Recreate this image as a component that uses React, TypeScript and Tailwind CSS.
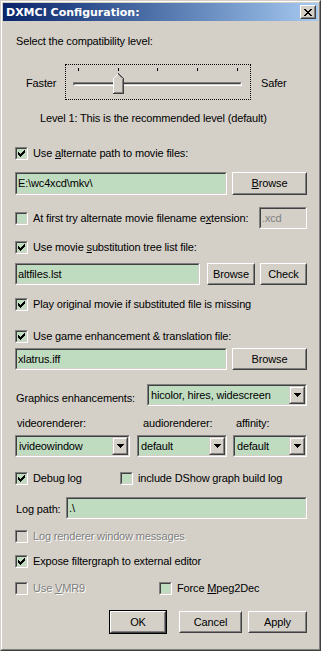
import React from "react";

// small pixel glyphs (classic windows look)
const CHECK = ["......#", ".....##", "#...###", "##.###.", "#####..", ".###...", "..#...."];
const CLOSE = ["##....##", ".##..##.", "..####..", "...##...", "..####..", ".##..##.", "##....##"];
const ARROW = ["#######", ".#####.", "..###..", "...#..."];

function Pix({ rows, color = "#000" }: { rows: string[]; color?: string }) {
  const w = rows[0].length;
  const h = rows.length;
  return (
    <svg width={w} height={h} viewBox={`0 0 ${w} ${h}`} shapeRendering="crispEdges" className="block">
      {rows.flatMap((r, y) =>
        r.split("").map((c, x) =>
          c === "#" ? <rect key={`${x}-${y}`} x={x} y={y} width={1} height={1} fill={color} /> : null
        )
      )}
    </svg>
  );
}

function Sunken({
  className = "",
  fill = "bg-[#c0dcc0]",
  children,
}: {
  className?: string;
  fill?: string;
  children?: React.ReactNode;
}) {
  return (
    <div className={`border border-t-[#808080] border-l-[#808080] border-b-white border-r-white ${className}`}>
      <div
        className={`flex h-full w-full items-center border border-t-[#404040] border-l-[#404040] border-b-[#d4d0c8] border-r-[#d4d0c8] ${fill}`}
      >
        {children}
      </div>
    </div>
  );
}

function Raised({ className = "", children }: { className?: string; children?: React.ReactNode }) {
  return (
    <div className={`border border-t-white border-l-white border-b-[#404040] border-r-[#404040] bg-[#d4d0c8] ${className}`}>
      <div className="flex h-full w-full items-center justify-center border border-t-[#d4d0c8] border-l-[#d4d0c8] border-b-[#808080] border-r-[#808080]">
        {children}
      </div>
    </div>
  );
}

function Button({ label, className = "", isDefault }: { label: React.ReactNode; className?: string; isDefault?: boolean }) {
  if (isDefault) {
    return (
      <div className={`border border-black ${className}`}>
        <Raised className="h-full w-full">{label}</Raised>
      </div>
    );
  }
  return <Raised className={className}>{label}</Raised>;
}

function CheckBox({
  checked,
  disabled,
  label,
  className = "",
}: {
  checked?: boolean;
  disabled?: boolean;
  label: React.ReactNode;
  className?: string;
}) {
  return (
    <div className={`flex h-[13px] items-center ${className}`}>
      <Sunken className="h-[13px] w-[13px] shrink-0" fill={disabled ? "bg-[#d4d0c8]" : "bg-[#c0dcc0]"}>
        {checked && (
          <div className="flex h-full w-full items-center justify-center">
            <Pix rows={CHECK} />
          </div>
        )}
      </Sunken>
      <span
        className={`ml-[5px] whitespace-nowrap leading-[13px] ${
          disabled ? "text-[#808080] [text-shadow:1px_1px_0_#fff]" : "text-black"
        }`}
      >
        {label}
      </span>
    </div>
  );
}

function Combo({ value, className = "" }: { value: string; className?: string }) {
  return (
    <Sunken className={className}>
      <span className="flex-1 truncate pl-[2px] leading-[13px]">{value}</span>
      <div className="flex h-full w-[16px] items-center justify-center border border-t-[#d4d0c8] border-l-[#d4d0c8] border-b-[#404040] border-r-[#404040] bg-[#d4d0c8]">
        <div className="flex h-full w-full items-center justify-center border border-t-white border-l-white border-b-[#808080] border-r-[#808080]">
          <Pix rows={ARROW} />
        </div>
      </div>
    </Sunken>
  );
}

function Slider() {
  const ticks = [13, 53, 92, 132, 172];
  return (
    <div className="relative h-[36px] w-[186px] border border-dotted border-black">
      {ticks.map((t) => (
        <div key={t} className="absolute top-[3px] h-[3px] w-px bg-black" style={{ left: t - 1 }} />
      ))}
      <div className="absolute left-[7px] top-[17px] h-[4px] w-[169px] border border-t-[#808080] border-l-[#808080] border-b-white border-r-white">
        <div className="h-[2px] w-full border border-t-[#404040] border-l-[#404040] border-b-[#d4d0c8] border-r-[#d4d0c8]" />
      </div>
      {/* thumb */}
      <svg className="absolute left-[47px] top-[8px]" width={11} height={21} viewBox="0 0 11 21" shapeRendering="crispEdges">
        <path d="M5 0 L0 5 L0 20 L10 20 L10 5 Z" fill="#d4d0c8" />
        <path d="M0.5 20 L0.5 5.5 L5.5 0.5" stroke="#fff" fill="none" />
        <path d="M5.5 0.5 L10.5 5.5 L10.5 20.5 L0 20.5" stroke="#404040" fill="none" />
        <path d="M9.5 6 L9.5 19.5 L1 19.5" stroke="#808080" fill="none" />
        <path d="M5.5 1.5 L9.5 5.5" stroke="#808080" fill="none" />
      </svg>
    </div>
  );
}

export default function App() {
  return (
    <div className="h-[651px] w-[321px] border border-t-[#d4d0c8] border-l-[#d4d0c8] border-b-[#404040] border-r-[#404040] bg-[#d4d0c8] font-['Liberation_Sans',Arial,sans-serif] text-[11px] tracking-[-0.15px] text-black">
      <div className="flex h-full w-full flex-col border border-t-white border-l-white border-b-[#808080] border-r-[#808080] p-px">
        {/* title bar */}
        <div className="flex h-[18px] shrink-0 items-center bg-gradient-to-r from-[#0a246a] to-[#a6caf0] pl-[3px] pr-[2px]">
          <span className="flex-1 font-['DejaVu_Sans',sans-serif] text-[11px] font-bold leading-[13px] tracking-normal text-white">
            DXMCI Configuration:
          </span>
          <Raised className="h-[14px] w-[16px]">
            <Pix rows={CLOSE} />
          </Raised>
        </div>

        {/* body */}
        <div className="flex flex-col pl-[12px] pr-[11px]">
          <div className="mt-[14px] h-[13px] pl-px leading-[13px]">Select the compatibility level:</div>

          <div className="mt-[16px] flex h-[36px]">
            <div className="w-[50px] pl-[11px] pt-[13px] leading-[13px]">Faster</div>
            <Slider />
            <div className="ml-[10px] pt-[13px] leading-[13px]">Safer</div>
          </div>

          <div className="mt-[12px] h-[13px] pl-[25px] leading-[13px]">
            Level 1: This is the recommended level (default)
          </div>

          <CheckBox
            className="mt-[22px]"
            checked
            label={
              <>
                Use <u>a</u>lternate path to movie files:
              </>
            }
          />

          <div className="mt-[12px] flex h-[23px] gap-[5px]">
            <Sunken className="h-full w-[212px]">
              <span className="pl-px leading-[13px]">{"E:\\wc4xcd\\mkv\\"}</span>
            </Sunken>
            <Button
              className="h-full w-[75px]"
              label={
                <span>
                  <u>B</u>rowse
                </span>
              }
            />
          </div>

          <div className="mt-[12px] flex h-[22px] items-center justify-between">
            <CheckBox
              label={
                <>
                  At first try alternate movie filename e<u>x</u>tension:
                </>
              }
            />
            <Sunken className="h-full w-[48px]" fill="bg-[#d4d0c8]">
              <span className="pl-px leading-[13px] text-[#808080]">.xcd</span>
            </Sunken>
          </div>

          <CheckBox
            className="mt-[12px]"
            checked
            label={
              <>
                Use movie <u>s</u>ubstitution tree list file:
              </>
            }
          />

          <div className="mt-[9px] flex h-[22px]">
            <Sunken className="h-full w-[185px]">
              <span className="pl-px leading-[13px]">altfiles.lst</span>
            </Sunken>
            <Button className="ml-[7px] h-full w-[48px]" label="Browse" />
            <Button className="ml-[5px] h-full w-[47px]" label="Check" />
          </div>

          <CheckBox className="mt-[13px]" checked label="Play original movie if substituted file is missing" />
          <CheckBox className="mt-[19px]" checked label="Use game enhancement & translation file:" />

          <div className="mt-[5px] flex h-[22px] gap-[5px]">
            <Sunken className="h-full w-[212px]">
              <span className="pl-px leading-[13px]">xlatrus.iff</span>
            </Sunken>
            <Button className="h-full w-[75px]" label="Browse" />
          </div>

          <div className="mt-[14px] flex h-[22px]">
            <div className="w-[132px] pl-px pt-[8px] leading-[13px]">Graphics enhancements:</div>
            <Combo className="h-full w-[160px]" value="hicolor, hires, widescreen" />
          </div>

          <div className="mt-[11px] flex h-[13px] leading-[13px]">
            <span className="w-[128px] pl-[2px]">videorenderer:</span>
            <span className="w-[93px]">audiorenderer:</span>
            <span>affinity:</span>
          </div>

          <div className="mt-[5px] flex h-[22px]">
            <Combo className="h-full w-[115px]" value="ivideowindow" />
            <Combo className="ml-[7px] h-full w-[90px]" value="default" />
            <Combo className="ml-[6px] h-full w-[74px]" value="default" />
          </div>

          <div className="mt-[15px] flex">
            <CheckBox className="w-[105px]" checked label="Debug log" />
            <CheckBox label="include DShow graph build log" />
          </div>

          <div className="mt-[12px] flex h-[22px] items-center">
            <span className="w-[51px] pl-px pt-[2px] leading-[13px]">Log path:</span>
            <Sunken className="h-full flex-1">
              <span className="pl-px leading-[13px]">.\</span>
            </Sunken>
          </div>

          <CheckBox className="mt-[11px]" disabled label="Log renderer window messages" />
          <CheckBox className="mt-[12px]" checked label="Expose filtergraph to external editor" />

          <div className="mt-[14px] flex">
            <CheckBox
              className="w-[144px]"
              disabled
              label={
                <>
                  Use <u>V</u>MR9
                </>
              }
            />
            <CheckBox
              label={
                <>
                  Force <u>M</u>peg2Dec
                </>
              }
            />
          </div>

          <div className="mt-[15px] flex h-[24px] items-center justify-end">
            <Button className="h-[24px] w-[58px]" isDefault label="OK" />
            <Button className="ml-[12px] h-[22px] w-[63px]" label="Cancel" />
            <Button className="ml-[6px] h-[22px] w-[59px]" label="Apply" />
          </div>
        </div>
      </div>
    </div>
  );
}
